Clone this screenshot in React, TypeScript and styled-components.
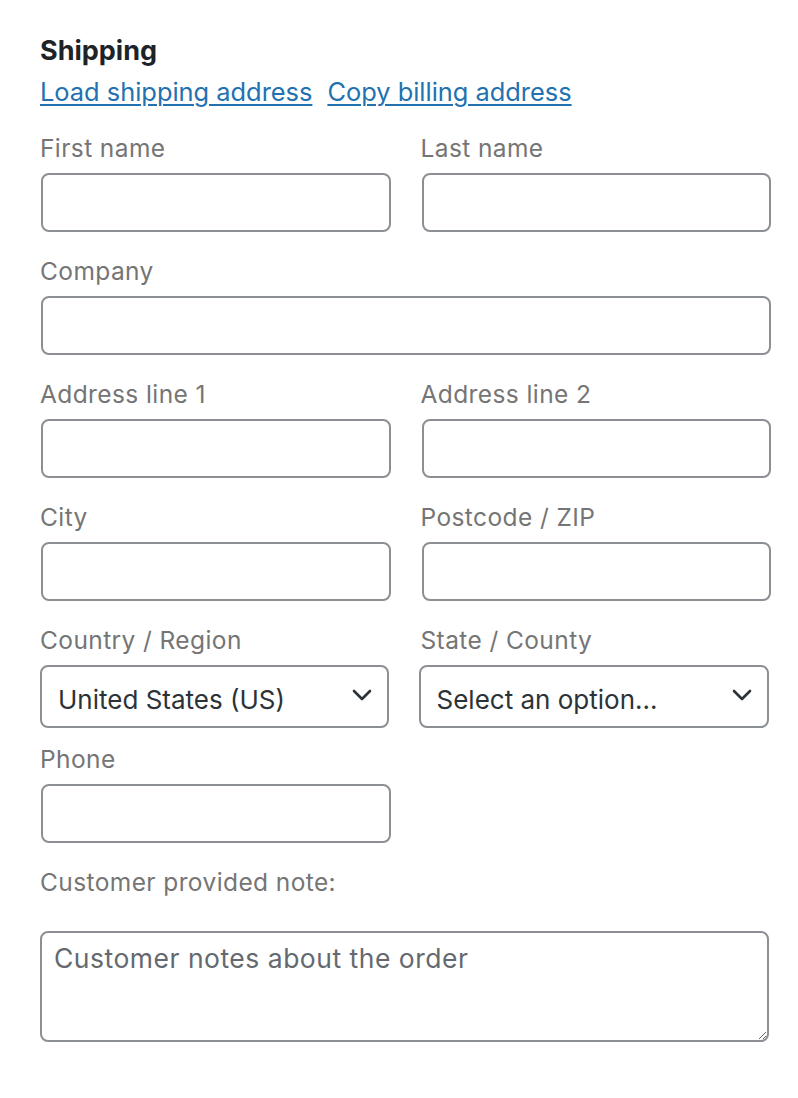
import React from "react";
import styled, { createGlobalStyle } from "styled-components";

const Global = createGlobalStyle`
  html, body { margin: 0; padding: 0; background: #fff; }
  body { font-family: Inter, "Noto Sans", "Liberation Sans", sans-serif; }
  * { box-sizing: border-box; }
`;

const Panel = styled.div`
  width: 798px;
  padding: 33px 27px 40px 40px;
`;

const Heading = styled.h3`
  margin: 0;
  font-size: 27px;
  line-height: 36px;
  font-weight: 700;
  color: #1d2327;
`;

const LinkRow = styled.div`
  display: flex;
  gap: 15px;
  margin-top: 5px;
  margin-bottom: 23px;
`;

const ActionLink = styled.a`
  font-size: 25.4px;
  line-height: 36px;
  color: #2271b1;
  text-decoration: underline;
  text-underline-offset: 3px;
  text-decoration-thickness: 2px;
  cursor: pointer;
`;

const Grid = styled.div`
  display: grid;
  grid-template-columns: minmax(0, 1fr) minmax(0, 1fr);
  column-gap: 30px;
`;

const Field = styled.div<{ $wide?: boolean; $after?: number }>`
  grid-column: ${(p) => (p.$wide ? "1 / -1" : "auto")};
  display: flex;
  flex-direction: column;
  min-width: 0;
  padding-bottom: ${(p) => p.$after ?? 24}px;
`;

const Label = styled.label<{ $gap?: number }>`
  font-size: 24.5px;
  letter-spacing: 0.4px;
  line-height: 30px;
  color: #757575;
  margin-bottom: ${(p) => p.$gap ?? 10}px;
`;

const TextInput = styled.input`
  width: auto;
  min-width: 0;
  height: 59px;
  margin: 0 0 0 1px;
  border: 2px solid #8c8f94;
  border-radius: 8px;
  padding: 0 16px;
  font-size: 26px;
  font-family: inherit;
  color: #2c3338;
  background: #fff;
  outline: none;
`;

const SelectWrap = styled.div<{ $shift?: number }>`
  position: relative;
  margin-left: ${(p) => -(p.$shift ?? 0)}px;
  margin-right: 2px;
`;

const Select = styled.select`
  appearance: none;
  width: 100%;
  height: 63px;
  border: 2px solid #8c8f94;
  border-radius: 8px;
  padding: 6px 56px 0 16px;
  font-size: 26px;
  font-family: inherit;
  color: #2c3338;
  background: #fff;
  outline: none;
`;

const Chevron = styled.svg`
  position: absolute;
  right: 17px;
  top: 24px;
  width: 20px;
  height: 12px;
  pointer-events: none;
`;

const TextArea = styled.textarea`
  height: 111px;
  margin-right: 2px;
  border: 2px solid #8c8f94;
  border-radius: 8px;
  padding: 8px 12px;
  font-size: 26.5px;
  letter-spacing: 0.5px;
  line-height: 34px;
  font-family: inherit;
  color: #2c3338;
  resize: vertical;
  outline: none;
  &::placeholder { color: #646970; opacity: 1; }
`;

const Empty = styled.div``;

const ChevronIcon = () => (
  <Chevron viewBox="0 0 20 12">
    <path d="M2 2 L10 10 L18 2" fill="none" stroke="#2c3338" strokeWidth="2.6" strokeLinecap="round" strokeLinejoin="round" />
  </Chevron>
);

export default function App() {
  return (
    <>
      <Global />
      <Panel>
        <Heading>Shipping</Heading>
        <LinkRow>
          <ActionLink>Load shipping address</ActionLink>
          <ActionLink>Copy billing address</ActionLink>
        </LinkRow>
        <Grid>
          <Field>
            <Label>First name</Label>
            <TextInput type="text" />
          </Field>
          <Field>
            <Label>Last name</Label>
            <TextInput type="text" />
          </Field>
          <Field $wide>
            <Label>Company</Label>
            <TextInput type="text" />
          </Field>
          <Field>
            <Label>Address line 1</Label>
            <TextInput type="text" />
          </Field>
          <Field>
            <Label>Address line 2</Label>
            <TextInput type="text" />
          </Field>
          <Field>
            <Label>City</Label>
            <TextInput type="text" />
          </Field>
          <Field>
            <Label>Postcode / ZIP</Label>
            <TextInput type="text" />
          </Field>
          <Field $after={16}>
            <Label>Country / Region</Label>
            <SelectWrap>
              <Select defaultValue="US">
                <option value="US">United States (US)</option>
              </Select>
              <ChevronIcon />
            </SelectWrap>
          </Field>
          <Field $after={16}>
            <Label>State / County</Label>
            <SelectWrap $shift={2}>
              <Select defaultValue="">
                <option value="">Select an option…</option>
              </Select>
              <ChevronIcon />
            </SelectWrap>
          </Field>
          <Field>
            <Label>Phone</Label>
            <TextInput type="text" />
          </Field>
          <Empty />
          <Field $wide>
            <Label $gap={34}>Customer provided note:</Label>
            <TextArea placeholder="Customer notes about the order" />
          </Field>
        </Grid>
      </Panel>
    </>
  );
}
